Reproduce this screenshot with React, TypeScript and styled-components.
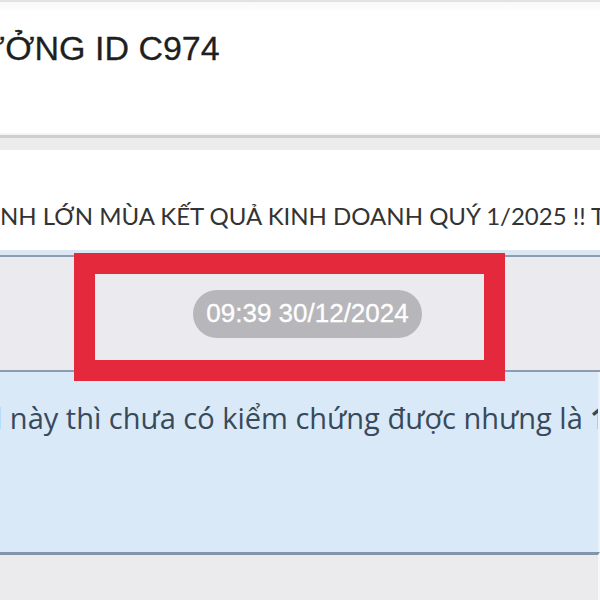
import React from "react";
import styled, { createGlobalStyle } from "styled-components";

const Global = createGlobalStyle`
  html, body { margin: 0; padding: 0; background: #ffffff; }
  body { width: 600px; height: 600px; overflow: hidden; }
`;

const Page = styled.div`
  width: 600px;
  height: 600px;
  overflow: hidden;
  display: flex;
  flex-direction: column;
  background: #ffffff;
`;

const TopRule = styled.div`
  height: 2px;
  flex: none;
  background: #e2e2e2;
`;

const Header = styled.header`
  height: 131px;
  flex: none;
  background: linear-gradient(#f8f8f8 0, #ffffff 10px);
  padding-top: 29px;
  box-sizing: border-box;
  overflow: hidden;
  white-space: nowrap;
`;

const Title = styled.h1`
  margin: 0 0 0 -69px;
  font-family: "Liberation Sans", Arial, sans-serif;
  font-weight: 400;
  font-size: 34px;
  line-height: 34px;
  color: #1f1f1f;
  -webkit-text-stroke: 0.3px #1f1f1f;
`;

const Divider = styled.div`
  height: 17px;
  flex: none;
  box-sizing: border-box;
  border-top: 2px solid #f4f4f4;
  box-shadow: inset 0 3px 0 #cfcfcf;
  background: #ececec;
`;

const Announcement = styled.section`
  height: 100px;
  flex: none;
  box-sizing: border-box;
  padding-top: 52px;
  background: #ffffff;
  overflow: hidden;
  white-space: nowrap;
`;

const AnnouncementText = styled.p`
  margin: 0;
  font-family: "Lato", "Open Sans", sans-serif;
  font-size: 24px;
  line-height: 28px;
  letter-spacing: 0px;
  color: #333333;
`;

const TimeBand = styled.div`
  position: relative;
  height: 122px;
  flex: none;
  box-sizing: border-box;
  border-top: 5px solid #dbe8f4;
  background: #ebebef;
  box-shadow: inset 0 2px 0 #8d9db0, inset 0 -2px 0 #8d9db0;
  display: flex;
  align-items: center;
  justify-content: center;
  padding-left: 15px;
`;

const Pill = styled.span`
  display: inline-flex;
  align-items: center;
  justify-content: center;
  height: 48px;
  width: 229px;
  border-radius: 24px;
  background: #b7b7bb;
  color: #ffffff;
  font-family: "Liberation Sans", Arial, sans-serif;
  font-size: 26px;
  font-weight: 400;
  -webkit-text-stroke: 0.3px #ffffff;
`;

const RedFrame = styled.div`
  position: absolute;
  left: 74px;
  top: -2px;
  width: 431px;
  height: 128px;
  box-sizing: border-box;
  border: 21px solid #e3293b;
  pointer-events: none;
`;

const Bubble = styled.section`
  height: 180px;
  flex: none;
  box-sizing: border-box;
  background: #d9e9f8;
  padding-top: 27px;
  overflow: hidden;
  white-space: nowrap;
  border-right: 2px solid #eaf2fb;
`;

const BubbleText = styled.p`
  margin: 0 0 0 -5px;
  font-family: "Open Sans", "Noto Sans", sans-serif;
  font-size: 29px;
  line-height: 38px;
  color: #38495b;
`;

const Strong = styled.b`
  font-weight: 700;
`;

const Footer = styled.div`
  flex: 1;
  border-top: 3px solid #8296ab;
  background: #ebebee;
  border-right: 2px solid #f8f8fa;
`;

export default function App() {
  return (
    <Page>
      <Global />
      <TopRule />
      <Header>
        <Title>THƯỞNG ID C974</Title>
      </Header>
      <Divider />
      <Announcement>
        <AnnouncementText>NH LỚN MÙA KẾT QUẢ KINH DOANH QUÝ 1/2025 !! T</AnnouncementText>
      </Announcement>
      <TimeBand>
        <Pill>09:39 30/12/2024</Pill>
        <RedFrame />
      </TimeBand>
      <Bubble>
        <BubbleText>
          l này thì chưa có kiểm chứng được nhưng là <Strong>1</Strong>
        </BubbleText>
      </Bubble>
      <Footer />
    </Page>
  );
}
